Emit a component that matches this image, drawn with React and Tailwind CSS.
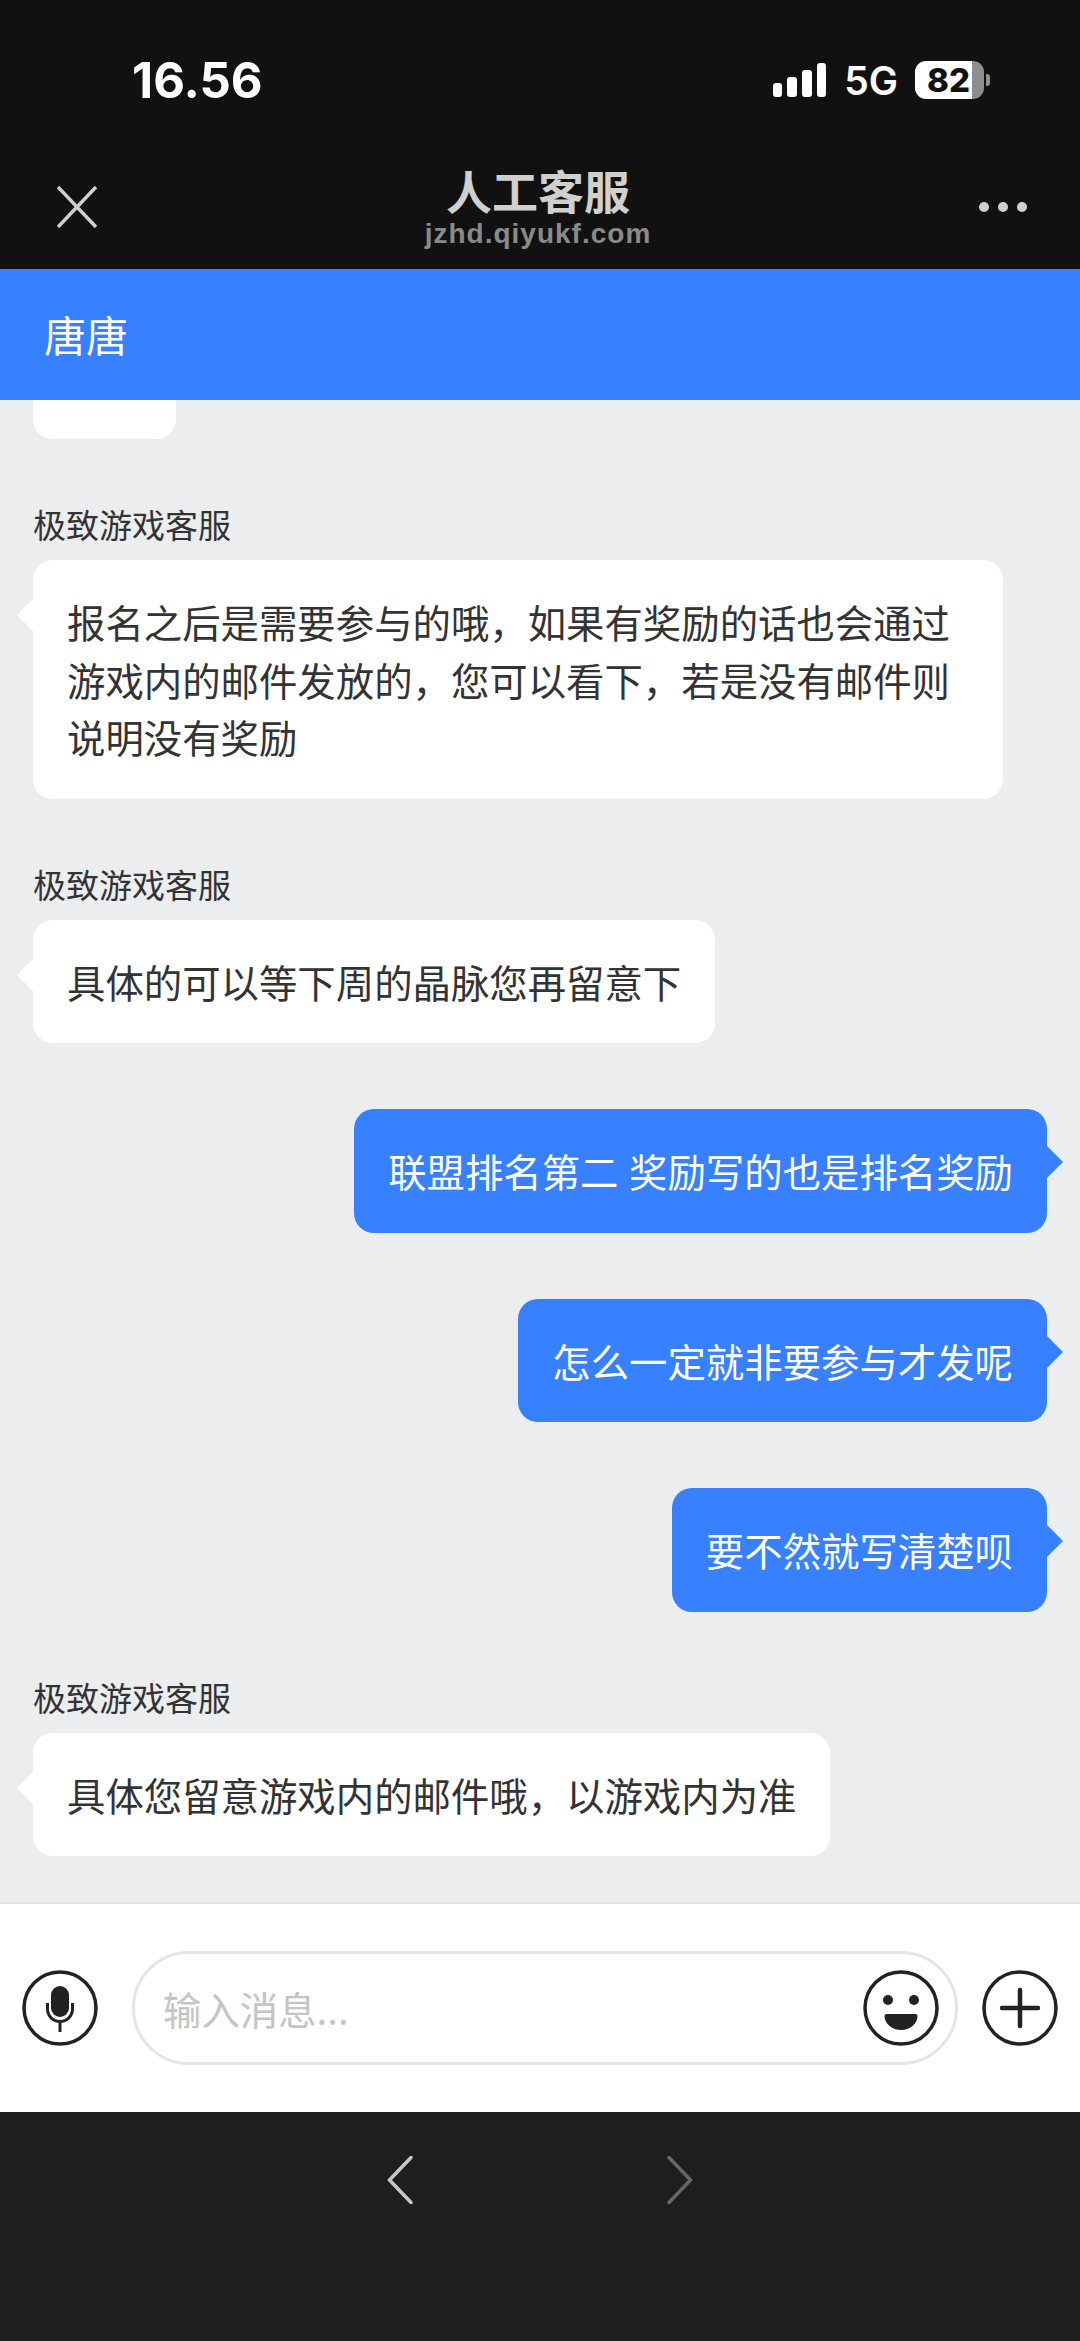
const cjk = "font-['Noto_Sans_CJK_SC','Noto_Sans',sans-serif]";

function Signal() {
  return (
    <div className="flex items-end gap-[5px]">
      <div className="w-[9px] h-[14px] rounded-[3px] bg-white" />
      <div className="w-[10px] h-[20px] rounded-[3px] bg-white" />
      <div className="w-[10px] h-[27px] rounded-[3px] bg-white" />
      <div className="w-[9px] h-[34px] rounded-[3px] bg-white" />
    </div>
  );
}

function Battery() {
  return (
    <div className="flex items-center gap-[2px]">
      <div className="flex w-[69px] h-[38px] rounded-[11px] overflow-hidden">
        <div className="w-[57px] bg-white flex items-center justify-end pr-[2px] text-[#111] text-[33px] font-extrabold font-['Inter',sans-serif] leading-none">
          82
        </div>
        <div className="flex-1 bg-[#8e8e8e]" />
      </div>
      <div className="w-[4px] h-[12px] rounded-r-[3px] bg-[#8e8e8e]" />
    </div>
  );
}

function Received({ children }) {
  return (
    <div className="mt-[62px]">
      <div className="h-[46px] leading-[46px] pl-[33px] text-[33px] text-[#333]">极致游戏客服</div>
      <div className="relative mt-[13px] ml-[33px] w-fit max-w-[970px] rounded-[20px] bg-white px-[34px] py-[33px] text-[38.4px] leading-[57.5px] text-[#333]">
        <div className="absolute -left-[16px] top-[39px] w-0 h-0 border-y-[16px] border-y-transparent border-r-[16px] border-r-white" />
        {children}
      </div>
    </div>
  );
}

function Sent({ children }) {
  return (
    <div className="mt-[66px] flex justify-end pr-[33px]">
      <div className="relative rounded-[20px] bg-[#3780ff] px-[34px] py-[33px] text-[38.4px] leading-[57.5px] text-white [word-spacing:2px]">
        <div className="absolute -right-[16px] top-[37px] w-0 h-0 border-y-[16px] border-y-transparent border-l-[16px] border-l-[#3780ff]" />
        {children}
      </div>
    </div>
  );
}

function CircleIcon({ children }) {
  return (
    <svg width="76" height="76" viewBox="0 0 76 76" fill="none" className="shrink-0">
      <circle cx="38" cy="38" r="36" stroke="#222" strokeWidth="3.5" />
      {children}
    </svg>
  );
}

export default function App() {
  return (
    <div className={`flex flex-col h-[2341px] w-[1080px] overflow-hidden bg-[#ecedef] ${cjk}`}>
      <header className="h-[269px] shrink-0 bg-[#111] pt-[60px]">
        <div className="flex items-center justify-between h-[40px] pl-[132px] pr-[90px]">
          <span className="text-[49px] font-bold leading-none text-white font-['Inter',sans-serif]">16.56</span>
          <div className="flex items-center">
            <Signal />
            <span className="ml-[18px] mr-[17px] text-[39px] font-semibold leading-none text-white font-['Inter',sans-serif]">5G</span>
            <Battery />
          </div>
        </div>
        <div className="flex items-start justify-between mt-[66px] pl-[57px] pr-[53px]">
          <svg width="40" height="42" viewBox="0 0 40 42" fill="none" className="mt-[20px]">
            <path d="M1 1 L39 41 M39 1 L1 41" stroke="#d0d0d0" strokeWidth="3.5" />
          </svg>
          <div className="flex flex-col items-center">
            <div className="text-[46px] leading-[46px] font-bold text-[#d0d0d0]">人工客服</div>
            <div className="mt-[7px] text-[28px] leading-[30px] font-bold tracking-[1px] text-[#8a8a8a] font-['Liberation_Sans',sans-serif]">
              jzhd.qiyukf.com
            </div>
          </div>
          <div className="flex gap-[9px] mt-[36px]">
            <div className="w-[10px] h-[10px] rounded-full bg-[#d0d0d0]" />
            <div className="w-[10px] h-[10px] rounded-full bg-[#d0d0d0]" />
            <div className="w-[10px] h-[10px] rounded-full bg-[#d0d0d0]" />
          </div>
        </div>
      </header>

      <div className="h-[131px] shrink-0 bg-[#3780ff] flex items-center pb-[2px] pl-[44px] text-[42px] text-white">唐唐</div>

      <main className="flex-1 overflow-hidden">
        <div className="ml-[33px] w-[143px] h-[39px] rounded-b-[20px] bg-white" />
        <Received>报名之后是需要参与的哦，如果有奖励的话也会通过游戏内的邮件发放的，您可以看下，若是没有邮件则说明没有奖励</Received>
        <Received>具体的可以等下周的晶脉您再留意下</Received>
        <Sent>联盟排名第二 奖励写的也是排名奖励</Sent>
        <Sent>怎么一定就非要参与才发呢</Sent>
        <Sent>要不然就写清楚呗</Sent>
        <Received>具体您留意游戏内的邮件哦，以游戏内为准</Received>
      </main>

      <div className="h-[210px] shrink-0 flex items-center pl-[22px] bg-white border-t-2 border-[#dfdfdf]">
        <CircleIcon>
          <rect x="29" y="16" width="18" height="31" rx="9" fill="#222" />
          <path d="M25.5 33v6a12.5 12.5 0 0 0 25 0v-6M38 52v10" stroke="#222" strokeWidth="3" />
        </CircleIcon>
        <div className="relative flex items-center w-[826px] h-[114px] ml-[34px] mr-[24px] rounded-[57px] border-[3px] border-[#e5e5e5] pl-[28px]">
          <span className="text-[38.4px] leading-none text-[#c4c4c4]">输入消息...</span>
          <div className="absolute right-[16px] top-[16px]">
            <CircleIcon>
              <circle cx="25" cy="30" r="5" fill="#222" />
              <circle cx="51" cy="30" r="5" fill="#222" />
              <path d="M21.5 46q0-2 2-2h29q2 0 2 2c0 8-8 14-16.500 14s-16.500-6-16.500-14z" fill="#222" />
            </CircleIcon>
          </div>
        </div>
        <CircleIcon>
          <path d="M20 38h36M38 20v36" stroke="#222" strokeWidth="4.500" strokeLinecap="round" />
        </CircleIcon>
      </div>

      <div className="h-[229px] shrink-0 bg-[#1e1e1e] flex justify-center items-start pt-[44px] gap-[254px]">
        <svg width="26" height="48" viewBox="0 0 26 48" fill="none">
          <path d="M24 1.500 L2.500 24 L24 46.500" stroke="#c8c8c8" strokeWidth="3.500" strokeLinecap="round" />
        </svg>
        <svg width="26" height="48" viewBox="0 0 26 48" fill="none">
          <path d="M2 1.500 L23.500 24 L2 46.500" stroke="#666" strokeWidth="3.500" strokeLinecap="round" />
        </svg>
      </div>
    </div>
  );
}
